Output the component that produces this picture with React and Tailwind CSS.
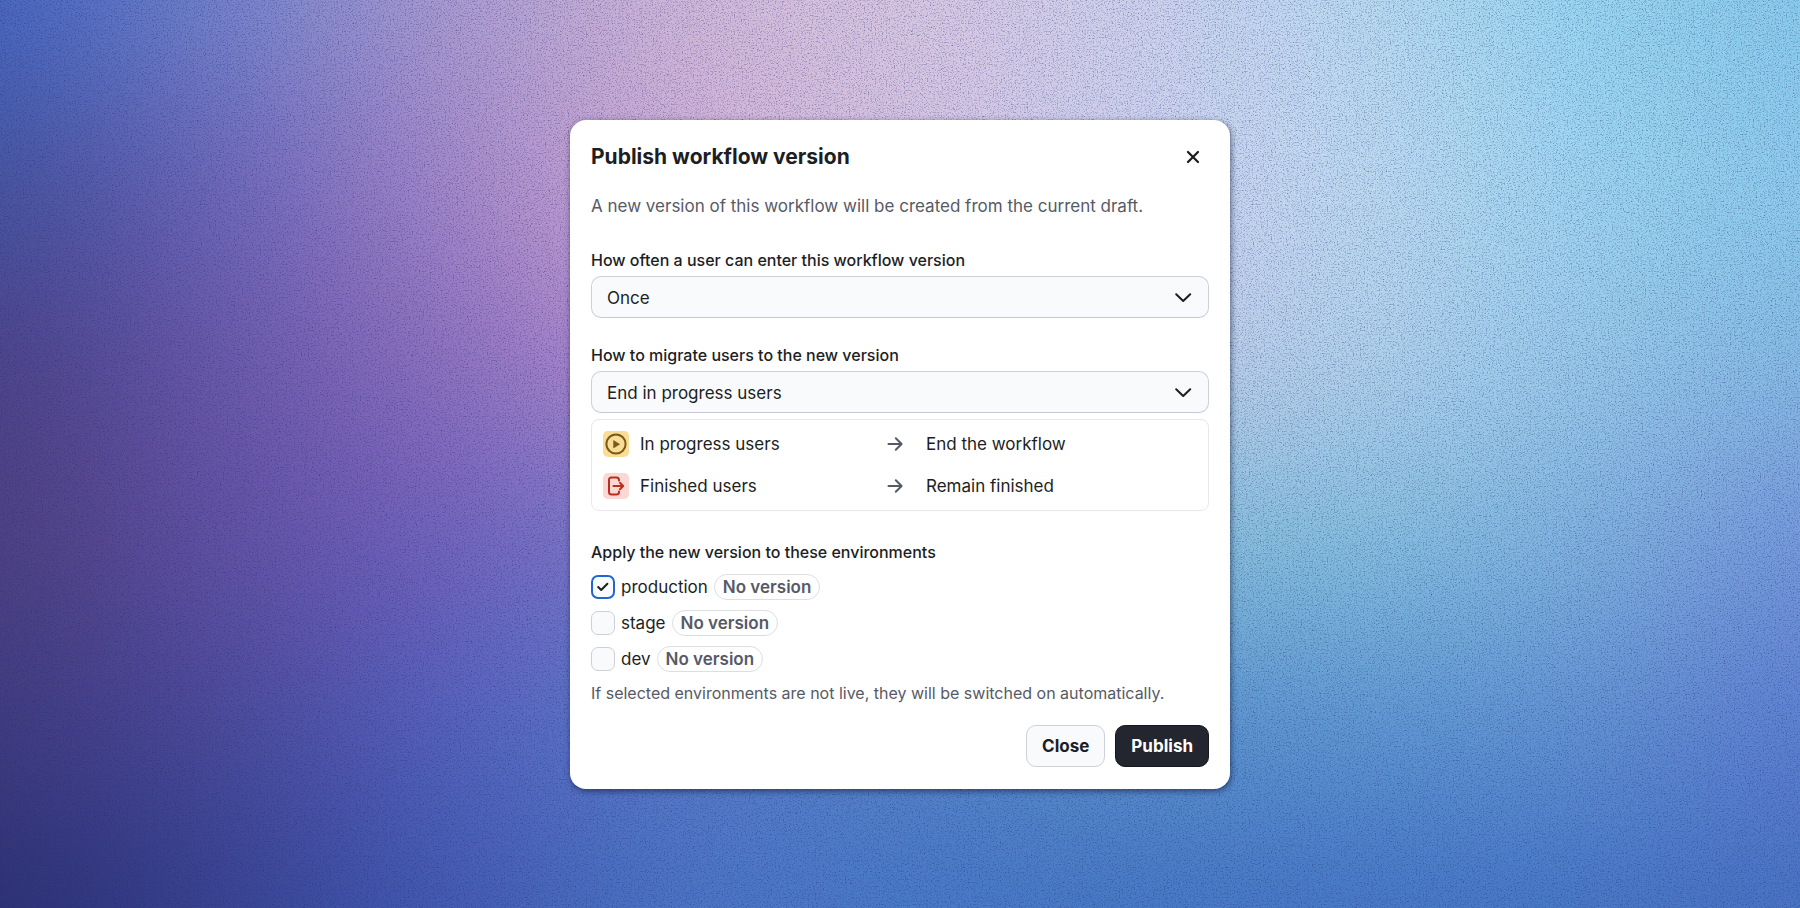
import { useState } from "react";

const MESH = [
  ["#4466bf", "#7485cd", "#ab9bd0", "#d0b8d8", "#d8c6e0", "#cfd0ec", "#bcdaf1", "#97d6f0", "#88c9ea"],
  ["#43529c", "#6c66ba", "#a688ca", "#d0aed4", "#d4c0e0", "#ccd0ec", "#c2daf1", "#9ed6f0", "#8ccaec"],
  ["#4a4186", "#6a59aa", "#8e70bf", "#b890d0", "#c0b0dc", "#c0c8e6", "#b4d2ec", "#99caea", "#85bae2"],
  ["#4c3f7e", "#6251a4", "#7262be", "#7a7ecc", "#7c98cc", "#82bcd8", "#85c0de", "#80b4de", "#7494da"],
  ["#3e3a7e", "#4b4a9a", "#5562be", "#5a7cc8", "#5684c8", "#5a90cc", "#5c96d2", "#6192d2", "#5c7ed0"],
  ["#2b2f70", "#374290", "#425ab2", "#4a74c4", "#4878c6", "#4676c2", "#4675c4", "#4675c4", "#4671c1"],
];

function Wallpaper() {
  return (
    <svg className="absolute inset-0 h-full w-full" viewBox="0 0 1800 908" preserveAspectRatio="none" aria-hidden="true">
      <defs>
        <filter id="soft" filterUnits="userSpaceOnUse" x="-400" y="-400" width="2600" height="1700" colorInterpolationFilters="sRGB">
          <feGaussianBlur stdDeviation="100 75" />
        </filter>
        <filter id="grain" x="0" y="0" width="100%" height="100%" colorInterpolationFilters="sRGB">
          <feTurbulence type="fractalNoise" baseFrequency="0.73" numOctaves="3" seed="11" />
          <feColorMatrix type="matrix" values="0 0 0 0 0.12  0 0 0 0 0.16  0 0 0 0 0.45  1.8 0 0 0 -0.9" />
        </filter>
      </defs>
      <g filter="url(#soft)">
        {MESH.map((row, r) =>
          row.map((color, c) => {
            const left = c === 0 ? -400 : c * 225 - 113;
            const right = c === 8 ? 2200 : c * 225 + 113;
            const top = r === 0 ? -400 : r * 182 - 91;
            const bottom = r === 5 ? 1300 : r * 182 + 92;
            return <rect key={`${r}-${c}`} x={left} y={top} width={right - left} height={bottom - top} fill={color} />;
          })
        )}
      </g>
      <rect width="1800" height="908" filter="url(#grain)" opacity="0.65" />
    </svg>
  );
}

function SelectField({ id, label, options }) {
  return (
    <div className="flex flex-col gap-1.5">
      <label htmlFor={id} className="text-[16px] leading-5 font-medium">{label}</label>
      <div className="relative">
        <select id={id} className="block h-[42px] w-full appearance-none rounded-[10px] border border-[#cdd0d9] border-b-[#c4c8d2] bg-[#f9fafc] pt-0.5 pr-12 pl-[15px] text-[17px] leading-[26px]">
          {options.map((o) => <option key={o}>{o}</option>)}
        </select>
        <svg className="pointer-events-none absolute inset-y-0 right-4 my-auto h-[18px] w-[18px]" viewBox="0 0 18 18" fill="none" stroke="currentColor" strokeWidth="2" strokeLinecap="round" strokeLinejoin="round" aria-hidden="true">
          <path d="M1.2 6.2 8.2 13 15.2 6.2" />
        </svg>
      </div>
    </div>
  );
}

function PlayIcon() {
  return (
    <svg className="h-[26px] w-[26px] rounded-[5px] bg-[#f9dd97] text-[#7a5a17]" viewBox="0 0 26 26" fill="none" aria-hidden="true">
      <circle cx="13" cy="13" r="9.6" stroke="currentColor" strokeWidth="2" />
      <path d="M10.6 9.5v7.4l6-3.7z" fill="currentColor" stroke="currentColor" strokeWidth="0.6" strokeLinejoin="round" />
    </svg>
  );
}

function ExitIcon() {
  return (
    <svg className="h-[26px] w-[26px] rounded-[5px] bg-[#fbd8d3] text-[#b5301f]" viewBox="0 0 26 26" fill="none" stroke="currentColor" strokeWidth="2" strokeLinecap="round" strokeLinejoin="round" aria-hidden="true">
      <path d="M16 7.4V7a2.6 2.6 0 0 0-2.6-2.6H8.6A2.6 2.6 0 0 0 6 7v12a2.6 2.6 0 0 0 2.6 2.6h4.8A2.6 2.6 0 0 0 16 19v-.4" />
      <path d="M10.4 13h9.6M17 9.8l3.2 3.2-3.2 3.2" />
    </svg>
  );
}

function Outcome({ icon, from, to }) {
  return (
    <li className="flex h-[26px] items-center text-[17px] leading-[26px]">
      <div className="flex flex-1 items-center gap-[11px]">{icon}<span>{from}</span></div>
      <svg className="h-[18px] w-[18px] text-[#565a66]" viewBox="0 0 18 18" fill="none" stroke="currentColor" strokeWidth="2" strokeLinecap="round" strokeLinejoin="round" aria-label="to">
        <path d="M2.5 9h13M9.8 3.2 15.6 9l-5.8 5.8" />
      </svg>
      <span className="ml-[22px] w-[271px]">{to}</span>
    </li>
  );
}

function Environment({ name, checked, onToggle }) {
  return (
    <div className="flex h-[26px] items-center gap-1.5">
      <span className="relative h-6 w-6">
        <input
          id={name}
          type="checkbox"
          checked={checked}
          onChange={onToggle}
          className="block h-6 w-6 appearance-none rounded-[7px] border border-[#cdd0d9] bg-[#f9fafc] checked:border-2 checked:border-[#2265d1]"
        />
        {checked && (
          <svg className="pointer-events-none absolute inset-0 h-6 w-6" viewBox="0 0 24 24" fill="none" stroke="currentColor" strokeWidth="2" strokeLinecap="round" strokeLinejoin="round" aria-hidden="true">
            <path d="M7.2 12 10.2 15 16.4 8.8" />
          </svg>
        )}
      </span>
      <label htmlFor={name} className="text-[17px] leading-6">{name}</label>
      <span className="rounded-full border border-[#dcdee5] px-2 text-[17px] leading-6 font-semibold text-[#565a66]">No version</span>
    </div>
  );
}

export default function App() {
  const [envs, setEnvs] = useState({ production: true, stage: false, dev: false });
  return (
    <div className="relative flex min-h-screen items-center justify-center overflow-hidden bg-[#6f86c8] font-['Inter',sans-serif] text-[#1c1e24]">
      <Wallpaper />
      <section role="dialog" aria-labelledby="title" className="relative w-full max-w-[660px] rounded-2xl bg-white px-[21px] pt-[21px] pb-[22px] shadow-[1px_2px_6px_rgba(10,20,50,0.6)]">
        <header className="flex h-8 items-center justify-between">
          <h1 id="title" className="text-[21px] leading-8 font-bold">Publish workflow version</h1>
          <button type="button" aria-label="Dismiss" className="flex h-8 w-8 items-center justify-center">
            <svg className="h-4 w-4" viewBox="0 0 16 16" fill="none" stroke="currentColor" strokeWidth="2.3" strokeLinecap="round" aria-hidden="true">
              <path d="M3 3l10 10M13 3 3 13" />
            </svg>
          </button>
        </header>
        <p className="mt-5 text-[17px] leading-[26px] text-[#565a66]">A new version of this workflow will be created from the current draft.</p>

        <form className="mt-[31px]" onSubmit={(e) => e.preventDefault()}>
          <SelectField id="frequency" label="How often a user can enter this workflow version" options={["Once", "Every time"]} />
          <div className="mt-[27px]">
            <SelectField id="migration" label="How to migrate users to the new version" options={["End in progress users", "Keep in progress users"]} />
          </div>
          <ul className="mt-1.5 flex flex-col gap-4 rounded-lg border border-[#e6e8ee] px-[11px] py-[11px]">
            <Outcome icon={<PlayIcon />} from="In progress users" to="End the workflow" />
            <Outcome icon={<ExitIcon />} from="Finished users" to="Remain finished" />
          </ul>

          <fieldset className="mt-[31px]">
            <legend className="text-[16px] leading-5 font-medium">Apply the new version to these environments</legend>
            <div className="mt-3 flex flex-col gap-2.5">
              {Object.keys(envs).map((name) => (
                <Environment key={name} name={name} checked={envs[name]} onToggle={() => setEnvs({ ...envs, [name]: !envs[name] })} />
              ))}
            </div>
          </fieldset>
          <p className="mt-[11px] text-[16px] leading-5 text-[#565a66]">If selected environments are not live, they will be switched on automatically.</p>

          <div className="mt-[22px] flex justify-end gap-2.5">
            <button type="button" className="h-[42px] rounded-[10px] border border-[#cdd0d9] bg-[#f9fafc] px-[15px] text-[17px] leading-[26px] font-bold">Close</button>
            <button type="submit" className="h-[42px] rounded-[10px] border border-[#15171c] bg-[#23262f] px-[15px] text-[17px] leading-[26px] font-bold text-white">Publish</button>
          </div>
        </form>
      </section>
    </div>
  );
}
